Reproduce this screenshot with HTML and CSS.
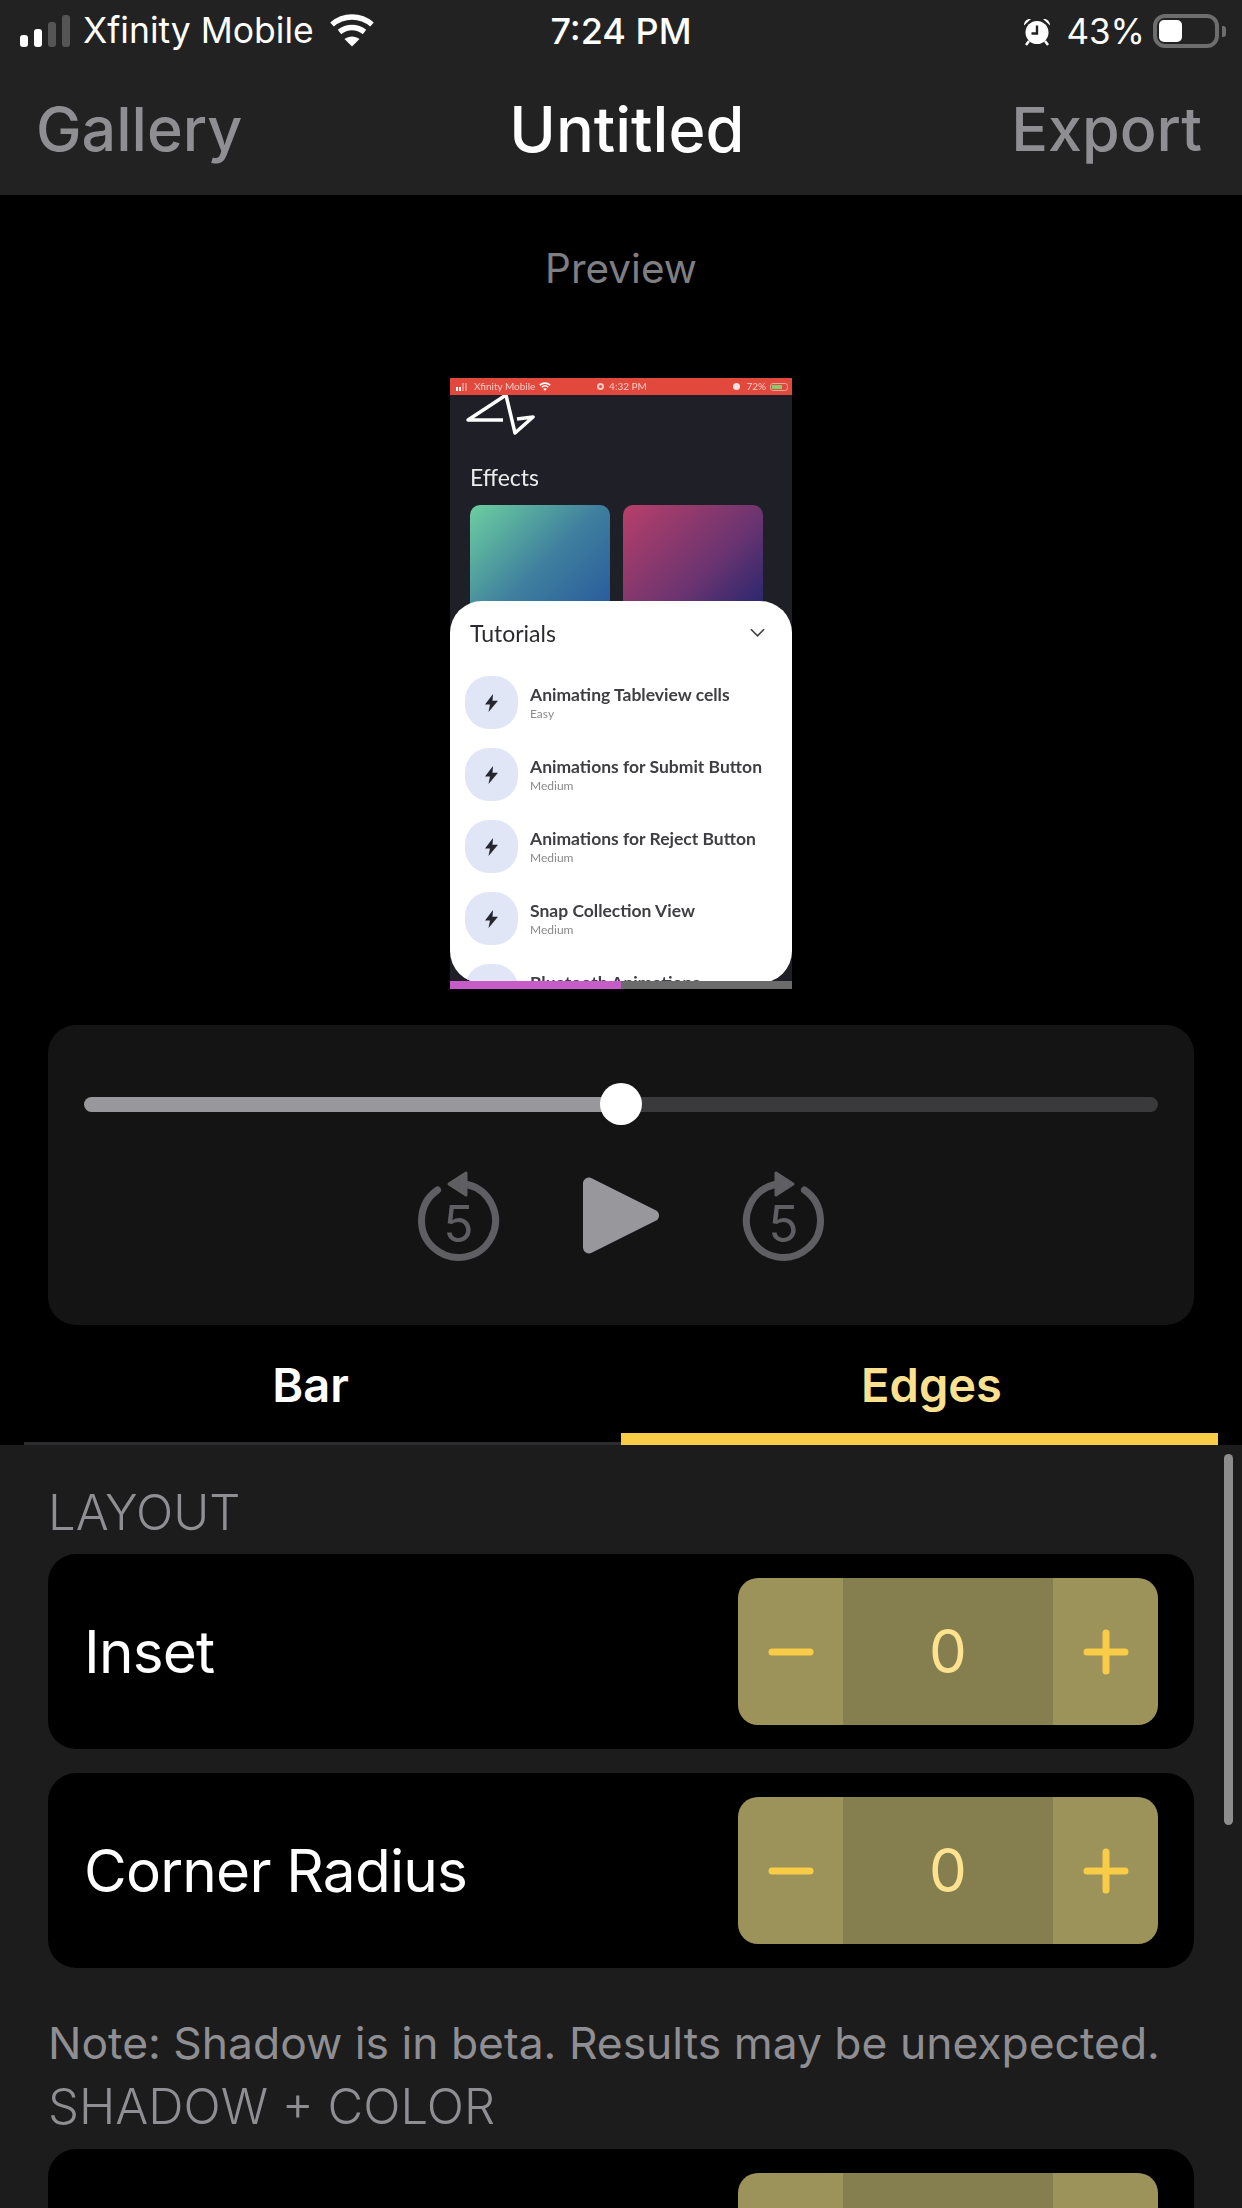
FILE: index.html
```html
<!DOCTYPE html>
<html lang="en">
<head>
<meta charset="utf-8">
<title>Untitled</title>
<link rel="stylesheet" href="styles.css">
</head>
<body>
<div class="phone">
  <header class="topbar">
    <div class="status">
      <div class="status-left">
        <div class="signal"><i class="b1"></i><i class="b2"></i><i class="b3"></i><i class="b4"></i></div>
        <span class="carrier">Xfinity Mobile</span>
        <svg class="wifi" viewBox="0 0 46 34"><path d="M3 11.500C14.500 1.500 31.500 1.500 43 11.500" /><path d="M10.500 19C18 13 28 13 35.500 19"/><path class="wifi-dot" d="M23 33.500L15.500 26C20 22.500 26 22.500 30.500 26Z"/></svg>
      </div>
      <span class="clock">7:24 PM</span>
      <div class="status-right">
        <svg class="alarm" viewBox="0 0 28 29"><circle cx="14" cy="15.500" r="11.500" fill="#fff"/><path d="M14 8.500V16.500H8.500" fill="none" stroke="#222" stroke-width="2.400"/><path d="M1 8.500C1 4 4 1.500 8 2ZM27 8.500C27 4 24 1.500 20 2Z" fill="#fff"/><path d="M6 24L3 28M22 24L25 28" stroke="#fff" stroke-width="2.500"/></svg>
        <span class="percent">43%</span>
        <div class="battery"><i class="battery-fill"></i></div>
        <i class="battery-nub"></i>
      </div>
    </div>
    <nav class="nav">
      <span class="nav-side">Gallery</span>
      <span class="nav-title">Untitled</span>
      <span class="nav-side">Export</span>
    </nav>
  </header>

  <main class="stage">
    <div class="preview-label">Preview</div>
    <div class="video">
      <div class="video-screen">
        <div class="mini-status">
          <div class="mini-left">
            <div class="mini-signal"><i></i><i></i><i class="dim"></i><i class="dim"></i></div>
            <span>Xfinity Mobile</span>
            <svg class="mini-wifi" viewBox="0 0 46 34"><path d="M3 11.500C14.500 1.500 31.500 1.500 43 11.500"/><path d="M10.500 19C18 13 28 13 35.500 19"/><path d="M23 33.500L15.500 26C20 22.500 26 22.500 30.500 26Z" class="wifi-dot"/></svg>
          </div>
          <div class="mini-center"><i class="mini-rec"></i><span>4:32 PM</span></div>
          <div class="mini-right"><i class="mini-alarm"></i><span>72%</span><div class="mini-batt"><i></i></div></div>
        </div>
        <svg class="mini-logo" viewBox="0 0 100 42"><path d="M53 25H18L56 0L65 38L83 22L67 24"/></svg>
        <div class="effects-title">Effects</div>
        <div class="effects">
          <div class="effect effect-green"></div>
          <div class="effect effect-pink"></div>
        </div>
        <section class="sheet">
          <div class="sheet-head">
            <span>Tutorials</span>
            <svg class="chevron" viewBox="0 0 16 10"><path d="M1 1L8 8L15 1"/></svg>
          </div>
          <div class="tut">
            <div class="bubble"><svg class="bolt" viewBox="0 0 13 18"><path d="M8 0L0 10.500H5L3.500 18L13 6.800H7.500Z"/></svg></div>
            <div class="tut-text"><div class="tut-title">Animating Tableview cells</div><div class="tut-sub">Easy</div></div>
          </div>
          <div class="tut">
            <div class="bubble"><svg class="bolt" viewBox="0 0 13 18"><path d="M8 0L0 10.500H5L3.500 18L13 6.800H7.500Z"/></svg></div>
            <div class="tut-text"><div class="tut-title">Animations for Submit Button</div><div class="tut-sub">Medium</div></div>
          </div>
          <div class="tut">
            <div class="bubble"><svg class="bolt" viewBox="0 0 13 18"><path d="M8 0L0 10.500H5L3.500 18L13 6.800H7.500Z"/></svg></div>
            <div class="tut-text"><div class="tut-title">Animations for Reject Button</div><div class="tut-sub">Medium</div></div>
          </div>
          <div class="tut">
            <div class="bubble"><svg class="bolt" viewBox="0 0 13 18"><path d="M8 0L0 10.500H5L3.500 18L13 6.800H7.500Z"/></svg></div>
            <div class="tut-text"><div class="tut-title">Snap Collection View</div><div class="tut-sub">Medium</div></div>
          </div>
          <div class="tut">
            <div class="bubble"></div>
            <div class="tut-text"><div class="tut-title">Bluetooth Animations</div></div>
          </div>
        </section>
      </div>
      <div class="video-progress"><i></i></div>
    </div>

    <div class="player">
      <div class="slider">
        <div class="slider-done"></div>
        <div class="slider-rest"></div>
        <div class="slider-thumb"></div>
      </div>
      <div class="transport">
        <svg class="skip" viewBox="0 0 101 100">
          <path class="skip-arc" d="M29.600 25A37 37 0 1 0 59 19.500"/>
          <path class="skip-head" d="M41 19L58 8V30Z"/>
          <text class="skip-num" x="50.500" y="77" text-anchor="middle">5</text>
        </svg>
        <svg class="play" viewBox="0 0 76 77"><path d="M6 6.500V70.500L70 38.500Z"/></svg>
        <svg class="skip" viewBox="0 0 101 100">
          <g transform="translate(101 0) scale(-1 1)">
            <path class="skip-arc" d="M29.600 25A37 37 0 1 0 59 19.500"/>
            <path class="skip-head" d="M41 19L58 8V30Z"/>
          </g>
          <text class="skip-num" x="50.500" y="77" text-anchor="middle">5</text>
        </svg>
      </div>
    </div>

    <div class="tabs">
      <div class="tab">Bar</div>
      <div class="tab tab-active">Edges</div>
    </div>
  </main>

  <section class="settings">
    <div class="scrollbar"></div>
    <h2 class="section-label">LAYOUT</h2>
    <div class="cards">
      <div class="card">
        <span class="card-label">Inset</span>
        <div class="stepper">
          <div class="step"><svg class="step-icon" viewBox="0 0 46 46"><path d="M4 23H42"/></svg></div>
          <div class="step-value">0</div>
          <div class="step"><svg class="step-icon" viewBox="0 0 46 46"><path d="M4 23H42M23 4V42"/></svg></div>
        </div>
      </div>
      <div class="card">
        <span class="card-label">Corner Radius</span>
        <div class="stepper">
          <div class="step"><svg class="step-icon" viewBox="0 0 46 46"><path d="M4 23H42"/></svg></div>
          <div class="step-value">0</div>
          <div class="step"><svg class="step-icon" viewBox="0 0 46 46"><path d="M4 23H42M23 4V42"/></svg></div>
        </div>
      </div>
    </div>
    <p class="note">Note: Shadow is in beta. Results may be unexpected.</p>
    <h2 class="section-label section-label-tight">SHADOW + COLOR</h2>
    <div class="cards">
      <div class="card">
        <span class="card-label"></span>
        <div class="stepper">
          <div class="step"></div>
          <div class="step-value"></div>
          <div class="step"></div>
        </div>
      </div>
    </div>
  </section>
</div>
</body>
</html>
```
FILE: styles.css
```css
* { box-sizing: border-box; }
html, body { margin: 0; padding: 0; background: #000; }
body { font-family: Inter, "Noto Sans", sans-serif; color: #fff; }
i { display: block; }

.phone {
  position: relative;
  width: 1242px;
  height: 2208px;
  overflow: hidden;
  background: #000;
}

/* Top bar */
.topbar { height: 195px; background: #222; }
.status {
  height: 62px;
  display: grid;
  grid-template-columns: 1fr auto 1fr;
  align-items: center;
  padding: 0 16px 0 20px;
}
.status-left, .status-right { display: flex; align-items: center; }
.status-right { justify-content: flex-end; }
.signal { display: flex; align-items: flex-end; gap: 6px; height: 32px; }
.signal i { width: 8px; border-radius: 3px; background: #fff; }
.signal .b1 { height: 12px; }
.signal .b2 { height: 18px; }
.signal .b3 { height: 25px; background: #555; }
.signal .b4 { height: 32px; background: #555; }
.carrier { margin-left: 13px; font-size: 35.500px; line-height: 62px; }
.wifi { width: 46px; height: 34px; margin-left: 15px; margin-top: -2px; fill: none; stroke: #fff; stroke-width: 5.500; }
.wifi .wifi-dot { fill: #fff; stroke: none; }
.clock { margin-right: 4px; font-size: 36px; font-weight: 500; line-height: 62px; }
.alarm { width: 28px; height: 29px; }
.percent { margin-left: 15px; font-size: 35px; line-height: 62px; }
.battery { width: 66px; height: 34px; margin-left: 8px; padding: 2px; border: 4px solid #6d6d6d; border-radius: 12px; }
.battery-fill { width: 23px; height: 100%; border-radius: 5px; background: #fff; }
.battery-nub { width: 4px; height: 11px; margin-left: 3px; border-radius: 0 3px 3px 0; background: #6d6d6d; }

.nav {
  height: 133px;
  padding: 0 40px 0 36px;
  display: flex;
  justify-content: space-between;
  align-items: center;
}
.nav-side { font-size: 61px; font-weight: 500; color: #8e8e93; }
.nav-title { font-size: 63px; font-weight: 500; color: #fff; }

/* Stage */
.stage { height: 1250px; }
.preview-label {
  padding-top: 49px;
  font-size: 40.500px;
  line-height: 50px;
  text-align: center;
  color: #7e7e83;
}

/* Embedded video preview */
.video {
  width: 342px;
  height: 611px;
  margin: 84px auto 0 auto;
  display: flex;
  flex-direction: column;
}
.video-screen {
  position: relative;
  height: 603px;
  overflow: hidden;
  background: #1f1f27;
  font-family: Lato, Inter, sans-serif;
  filter: blur(0.45px);
}
.mini-status {
  position: relative;
  z-index: 1;
  height: 17px;
  padding: 0 4px 0 6px;
  display: grid;
  grid-template-columns: 1fr auto 1fr;
  align-items: center;
  background: #e2483c;
  font-size: 10px;
  line-height: 17px;
  color: #f7c9c3;
}
.mini-left, .mini-center, .mini-right { display: flex; align-items: center; }
.mini-right { justify-content: flex-end; }
.mini-signal { display: flex; align-items: flex-end; gap: 1px; height: 8px; margin-right: 7px; }
.mini-signal i { width: 2px; height: 4px; background: #fff; }
.mini-signal .dim { height: 8px; background: #e98a82; }
.mini-wifi { width: 12px; height: 9px; margin-left: 4px; fill: none; stroke: #fff; stroke-width: 6; }
.mini-wifi .wifi-dot { fill: #fff; stroke: none; }
.mini-rec { width: 7px; height: 7px; margin-right: 5px; border: 2px solid #f7c9c3; border-radius: 50%; }
.mini-alarm { width: 7px; height: 7px; margin-right: 6px; border-radius: 50%; background: #f3e2df; }
.mini-batt { width: 18px; height: 8px; margin-left: 4px; padding: 1px; border: 1px solid #f0a49c; border-radius: 3px; }
.mini-batt i { width: 10px; height: 100%; background: #7fcf6a; }
.mini-logo { display: block; width: 100px; height: 42px; fill: none; stroke: #fff; stroke-width: 3.500; stroke-linejoin: round; }
.effects-title { margin: 26px 0 0 20px; font-size: 23px; line-height: 28px; color: #ececec; }
.effects { display: flex; gap: 13px; margin: 14px 0 0 20px; }
.effect { width: 140px; height: 125px; border-radius: 10px; }
.effect-green { background: linear-gradient(135deg, #6ccfa0 0%, #3f7f9e 50%, #23539c 100%); }
.effect-pink { background: linear-gradient(135deg, #b83f6a 0%, #6c3470 55%, #18246f 100%); }
.sheet {
  position: absolute;
  left: 0;
  right: 0;
  top: 223px;
  height: 382px;
  overflow: hidden;
  border-radius: 32px;
  background: #fff;
  color: #2b2b2f;
}
.sheet-head {
  display: flex;
  justify-content: space-between;
  align-items: center;
  height: 60px;
  padding: 3px 27px 0 20px;
  font-size: 23px;
}
.chevron { width: 15px; height: 10px; fill: none; stroke: #444; stroke-width: 1.800; }
.sheet-head + .tut { margin-top: 15px; }
.tut { display: flex; align-items: flex-start; gap: 12px; height: 72px; padding-left: 15px; }
.bubble {
  flex: none;
  width: 53px;
  height: 53px;
  display: flex;
  align-items: center;
  justify-content: center;
  border-radius: 24px;
  background: #e0e6f6;
}
.bolt { width: 13px; height: 18px; fill: #26262e; }
.tut-text { padding-top: 8px; }
.tut-title { font-size: 17.500px; line-height: 22px; font-weight: 700; color: #3f3f43; white-space: nowrap; }
.tut-sub { font-size: 12px; line-height: 16px; color: #8a8a8a; }
.video-progress { height: 8px; background: #6b6b6b; }
.video-progress i { width: 50%; height: 100%; background: #c75bc8; }

/* Player */
.player {
  height: 300px;
  margin: 36px 48px 0;
  padding: 72px 36px 0;
  border-radius: 28px;
  background: #141414;
}
.slider { position: relative; display: flex; height: 15px; }
.slider-done { flex: 1; border-radius: 8px 0 0 8px; background: #98979c; }
.slider-rest { flex: 1; border-radius: 0 8px 8px 0; background: #3a3a3c; }
.slider-thumb {
  position: absolute;
  left: 50%;
  top: -14px;
  width: 42px;
  height: 42px;
  margin-left: -21px;
  border-radius: 50%;
  background: #fff;
}
.transport { display: flex; justify-content: center; align-items: center; gap: 74px; margin-top: 53px; }
.skip { width: 101px; height: 100px; }
.skip-arc { fill: none; stroke: #5f5f63; stroke-width: 7; stroke-linecap: round; }
.skip-head { fill: #5f5f63; stroke: #5f5f63; stroke-width: 3; stroke-linejoin: round; }
.skip-num { font-family: Inter, sans-serif; font-size: 50px; font-weight: 400; fill: #5f5f63; }
.play { width: 76px; height: 77px; }
.play path { fill: #98979c; stroke: #98979c; stroke-width: 12; stroke-linejoin: round; }

/* Tabs */
.tabs { display: flex; height: 120px; }
.tab {
  position: relative;
  flex: 1;
  padding-top: 29px;
  font-size: 47px;
  font-weight: 600;
  line-height: 62px;
  text-align: center;
}
.tab::after {
  content: "";
  position: absolute;
  left: 24px;
  right: 0;
  bottom: 0;
  height: 3px;
  background: #2c2c2e;
}
.tab-active { color: #fbe08f; }
.tab-active::after { left: 0; right: 24px; height: 12px; background: #f8cc46; }

/* Settings */
.settings {
  position: relative;
  height: 763px;
  padding: 41px 48px 0 48px;
  background: #1c1c1c;
}
.scrollbar {
  position: absolute;
  top: 9px;
  right: 9px;
  width: 9px;
  height: 371px;
  border-radius: 5px;
  background: #8d8d8d;
}
.section-label {
  margin: 0 0 14px 0;
  font-size: 49px;
  font-weight: 300;
  line-height: 54px;
  color: #8e8e93;
}
.section-label-tight { margin-top: 0; line-height: 64px; margin-bottom: 10px; }
.cards { display: flex; flex-direction: column; gap: 24px; }
.card {
  height: 195px;
  padding: 24px 36px;
  display: flex;
  justify-content: space-between;
  align-items: flex-start;
  border-radius: 28px;
  background: #000;
}
.card-label { font-size: 58.500px; letter-spacing: -0.800px; line-height: 147px; }
.stepper {
  width: 420px;
  height: 147px;
  display: flex;
  overflow: hidden;
  border-radius: 20px;
  background: #9c935b;
}
.step { width: 105px; display: flex; align-items: center; justify-content: center; }
.step-icon { width: 46px; height: 46px; fill: none; stroke: #f8cc46; stroke-width: 7; stroke-linecap: round; }
.step-value {
  flex: 1;
  background: #857f4f;
  color: #fde28f;
  font-size: 60px;
  line-height: 147px;
  text-align: center;
}
.note {
  margin: 43px 0 0 0;
  font-size: 44.400px;
  line-height: 64px;
  color: #8e8e93;
}
```
